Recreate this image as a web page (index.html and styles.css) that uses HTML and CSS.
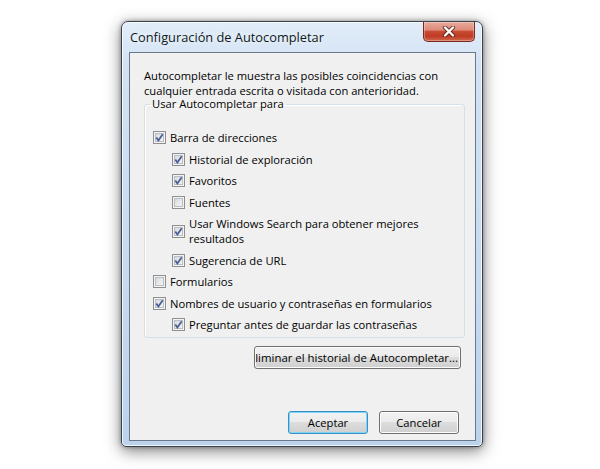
FILE: index.html
```html
<!DOCTYPE html>
<html lang="es">

<head>
  <meta charset="UTF-8">
  <meta name="viewport" content="width=device-width, initial-scale=1.0">
  <title>Configuración de Autocompletar</title>
  <link rel="stylesheet" href="styles.css">
</head>

<body>
  <div class="desktop">
    <div class="window">
      <div class="titlebar">
        <span class="title">Configuración de Autocompletar</span>
        <button class="close-btn" type="button" aria-label="Cerrar">
          <svg width="16" height="11" viewBox="0 0 16 11">
            <path d="M4 1.5 L12 9.5 M12 1.5 L4 9.5" stroke="#4a1a12" stroke-width="4.2" stroke-linecap="round" fill="none" opacity="0.75" />
            <path d="M4 1.5 L12 9.5 M12 1.5 L4 9.5" stroke="#ffffff" stroke-width="2.3" stroke-linecap="round" fill="none" />
          </svg>
        </button>
      </div>

      <div class="client">
        <p class="intro">Autocompletar le muestra las posibles coincidencias con<br>cualquier entrada escrita o visitada con anterioridad.</p>

        <fieldset class="group">
          <legend>Usar Autocompletar para</legend>

          <label class="opt">
            <span class="box"><svg viewBox="0 0 13 13"><path d="M3.3 6.4 L5.4 9.4 L9.7 3.2" /></svg></span>
            Barra de direcciones
          </label>
          <label class="opt sub">
            <span class="box"><svg viewBox="0 0 13 13"><path d="M3.3 6.4 L5.4 9.4 L9.7 3.2" /></svg></span>
            Historial de exploración
          </label>
          <label class="opt sub">
            <span class="box"><svg viewBox="0 0 13 13"><path d="M3.3 6.4 L5.4 9.4 L9.7 3.2" /></svg></span>
            Favoritos
          </label>
          <label class="opt sub">
            <span class="box"></span>
            Fuentes
          </label>
          <label class="opt sub">
            <span class="box"><svg viewBox="0 0 13 13"><path d="M3.3 6.4 L5.4 9.4 L9.7 3.2" /></svg></span>
            <span>Usar Windows Search para obtener mejores<br>resultados</span>
          </label>
          <label class="opt sub">
            <span class="box"><svg viewBox="0 0 13 13"><path d="M3.3 6.4 L5.4 9.4 L9.7 3.2" /></svg></span>
            Sugerencia de URL
          </label>
          <label class="opt">
            <span class="box"></span>
            Formularios
          </label>
          <label class="opt">
            <span class="box"><svg viewBox="0 0 13 13"><path d="M3.3 6.4 L5.4 9.4 L9.7 3.2" /></svg></span>
            Nombres de usuario y contraseñas en formularios
          </label>
          <label class="opt sub">
            <span class="box"><svg viewBox="0 0 13 13"><path d="M3.3 6.4 L5.4 9.4 L9.7 3.2" /></svg></span>
            Preguntar antes de guardar las contraseñas
          </label>
        </fieldset>

        <button class="btn btn-wide" type="button"><span>Eliminar el historial de Autocompletar...</span></button>

        <div class="footer">
          <button class="btn btn-default" type="button">Aceptar</button>
          <button class="btn" type="button">Cancelar</button>
        </div>
      </div>
    </div>
  </div>
</body>

</html>
```

FILE: styles.css
```css
* {
  margin: 0;
  padding: 0;
  box-sizing: border-box;
}

body {
  width: 600px;
  height: 469px;
  background: #ffffff;
  font-family: 'Open Sans', 'Noto Sans', sans-serif;
  font-size: 11.2px;
  color: #000000;
  overflow: hidden;
}

.desktop {
  padding: 21px 0 0 121px;
}

/* ventana estilo Aero */
.window {
  width: 362px;
  height: 426px;
  border: 1px solid #3a434d;
  border-radius: 7px 7px 5px 5px;
  background: linear-gradient(180deg, #e2edf9 0%, #d2e2f4 10%, #c6daf0 60%, #bcd3ec 100%);
  box-shadow:
    0 4px 16px rgba(0, 0, 0, 0.5),
    0 0 4px rgba(0, 0, 0, 0.35),
    inset 0 0 0 1px rgba(255, 255, 255, 0.75);
  display: flex;
  flex-direction: column;
}

.titlebar {
  height: 30px;
  display: flex;
  align-items: center;
  padding-left: 8px;
}

.title {
  font-size: 12.8px;
  color: #101820;
  text-shadow: 0 0 6px rgba(255, 255, 255, 0.9);
}

.close-btn {
  align-self: flex-start;
  margin-left: auto;
  margin-right: 7px;
  width: 52px;
  height: 20px;
  border: 1px solid #7a2a1d;
  border-top: none;
  border-radius: 0 0 5px 5px;
  background: linear-gradient(180deg, #eaaa9c 0%, #dd8a77 42%, #c84b34 50%, #c03a24 75%, #d06a50 100%);
  box-shadow: inset 0 0 0 1px rgba(255, 255, 255, 0.3);
  display: flex;
  align-items: center;
  justify-content: center;
}

.client {
  flex: 1;
  margin: 0 6px 5px 7px;
  border: 1px solid #6a7889;
  background: #f0f0f0;
  display: flex;
  flex-direction: column;
}

.intro {
  margin: 15px 0 0 14px;
  line-height: 15px;
}

.group {
  margin: 0 10px 0 14px;
  border: 1px solid #d5dfe5;
  border-radius: 3px;
  padding: 17px 8px 1px;
  box-shadow: inset 1px 1px 0 #ffffff;
}

.group legend {
  margin-left: -3px;
  padding: 0 2px;
  line-height: 12px;
}

.opt {
  display: flex;
  align-items: center;
  padding: 3.25px 0;
  line-height: 15px;
}

.opt.sub {
  margin-left: 19px;
}

/* casilla estilo Windows 7 */
.box {
  flex: none;
  width: 13px;
  height: 13px;
  margin-right: 4px;
  border: 1px solid #8e8f8f;
  background: linear-gradient(135deg, #cdd1d7 0%, #e6e8eb 50%, #f8f8f8 100%);
  box-shadow: inset 0 0 0 1px #f4f4f4, inset 0 0 0 2px #b9bec4;
  position: relative;
}

.box svg {
  position: absolute;
  top: -1px;
  left: -1px;
  width: 13px;
  height: 13px;
}

.box path {
  fill: none;
  stroke: #4a5e96;
  stroke-width: 1.8;
}

.btn {
  font-family: inherit;
  font-size: 11.2px;
  color: #000000;
  border: 1px solid #707070;
  border-radius: 3px;
  background: linear-gradient(180deg, #f2f2f2 0%, #ebebeb 49%, #dddddd 50%, #cfcfcf 100%);
  box-shadow: inset 0 0 0 1px #fcfcfc;
  height: 23px;
  width: 80px;
}

.btn-wide {
  align-self: flex-end;
  width: 207px;
  margin: 8px 14px 0 0;
  padding-right: 2px;
  font-size: 11.4px;
  display: flex;
  justify-content: flex-end;
  align-items: center;
  overflow: hidden;
  white-space: nowrap;
}

.btn-wide span {
  flex: none;
}

.btn-default {
  border-color: #3a8fc4;
  box-shadow: inset 0 0 0 1px #7fd5f6;
}

.footer {
  margin: auto 16px 6px 0;
  display: flex;
  justify-content: flex-end;
  gap: 11px;
}
```
